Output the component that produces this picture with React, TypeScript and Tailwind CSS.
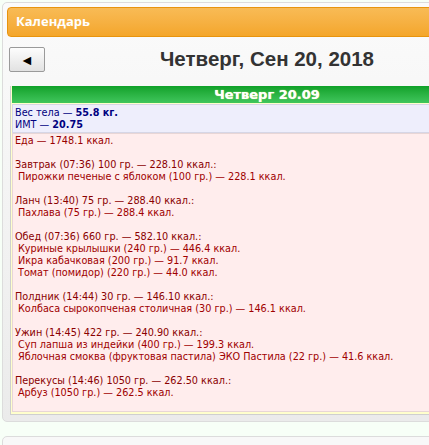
const meals = [
  {
    head: 'Завтрак (07:36) 100 гр. — 228.10 ккал.:',
    items: ['Пирожки печеные с яблоком (100 гр.) — 228.1 ккал.'],
  },
  {
    head: 'Ланч (13:40) 75 гр. — 288.40 ккал.:',
    items: ['Пахлава (75 гр.) — 288.4 ккал.'],
  },
  {
    head: 'Обед (07:36) 660 гр. — 582.10 ккал.:',
    items: [
      'Куриные крылышки (240 гр.) — 446.4 ккал.',
      'Икра кабачковая (200 гр.) — 91.7 ккал.',
      'Томат (помидор) (220 гр.) — 44.0 ккал.',
    ],
  },
  {
    head: 'Полдник (14:44) 30 гр. — 146.10 ккал.:',
    items: ['Колбаса сырокопченая столичная (30 гр.) — 146.1 ккал.'],
  },
  {
    head: 'Ужин (14:45) 422 гр. — 240.90 ккал.:',
    items: [
      'Суп лапша из индейки (400 гр.) — 199.3 ккал.',
      'Яблочная смоква (фруктовая пастила) ЭКО Пастила (22 гр.) — 41.6 ккал.',
    ],
  },
  {
    head: 'Перекусы (14:46) 1050 гр. — 262.50 ккал.:',
    items: ['Арбуз (1050 гр.) — 262.5 ккал.'],
  },
];

export default function App() {
  return (
    <div className="w-[429px] h-[445px] overflow-hidden bg-[#f7fff7]">
      {/* Calendar panel */}
      <div className="ml-[2px] mt-[2px] w-[530px] rounded-[5px] border border-[#dcdcdc] bg-gradient-to-b from-[#fbfbfb] to-[#ebebeb] px-[4px] pt-[4px] pb-[6px]">
        <div className="h-[30px] rounded-[4px] border border-[#e8940e] bg-gradient-to-b from-[#f8bb55] to-[#f4a62a] flex items-center pl-[8px] font-['Open_Sans',sans-serif] text-[13px] font-bold text-white">
          Календарь
        </div>

        <div className="relative mt-[10px] h-[25px] flex items-center justify-center">
          <button className="absolute left-[2px] top-0 w-[36px] h-[25px] rounded-[2px] border border-[#9a9a9a] bg-gradient-to-b from-[#fdfdfd] to-[#e2e2e2] flex items-center justify-center text-[14px] leading-none text-black">
            ◄
          </button>
          <div className="font-['Liberation_Sans',Arial,sans-serif] text-[20.5px] font-bold text-[#333] leading-none">
            Четверг, Сен 20, 2018
          </div>
        </div>

        <div className="mt-[14px] ml-[3px] w-[512px] border-l border-b border-[#cfcfcf] bg-[#ffffcc] pl-px pb-[2px] font-['DejaVu_Sans_Condensed','DejaVu_Sans',sans-serif] text-[10.75px] leading-[12px]">
          <div className="h-[17px] bg-gradient-to-b from-[#0ea128] to-[#3fc65c] flex items-center justify-center font-['DejaVu_Sans','Open_Sans',sans-serif] text-[13px] font-bold text-white [text-shadow:0_0_1px_#ffff99]">
            Четверг 20.09
          </div>
          <div className="mt-px border-y border-l border-[#d6d6e6] bg-[#eeeefc] px-[2px] pt-[2px] pb-px text-[#000080]">
            <div>
              Вес тела — <b>55.8 кг.</b>
            </div>
            <div>
              ИМТ — <b>20.75</b>
            </div>
          </div>
          <div className="border-y border-l border-[#e8d6d6] bg-[#ffeded] px-[2px] pt-px pb-[12px] text-[#990000]">
            <div>Еда — 1748.1 ккал.</div>
            {meals.map((m) => (
              <div key={m.head} className="mt-[12px]">
                <div className="text-[#8a0000]">{m.head}</div>
                {m.items.map((it) => (
                  <div key={it} className="pl-[3px] text-[#a00000]">
                    {it}
                  </div>
                ))}
              </div>
            ))}
          </div>
        </div>
      </div>

      {/* Next panel, cut off */}
      <div className="ml-[2px] mt-[14px] w-[530px] h-[40px] rounded-[5px] border border-[#dcdcdc] bg-[#f8f8f8]" />
    </div>
  );
}
